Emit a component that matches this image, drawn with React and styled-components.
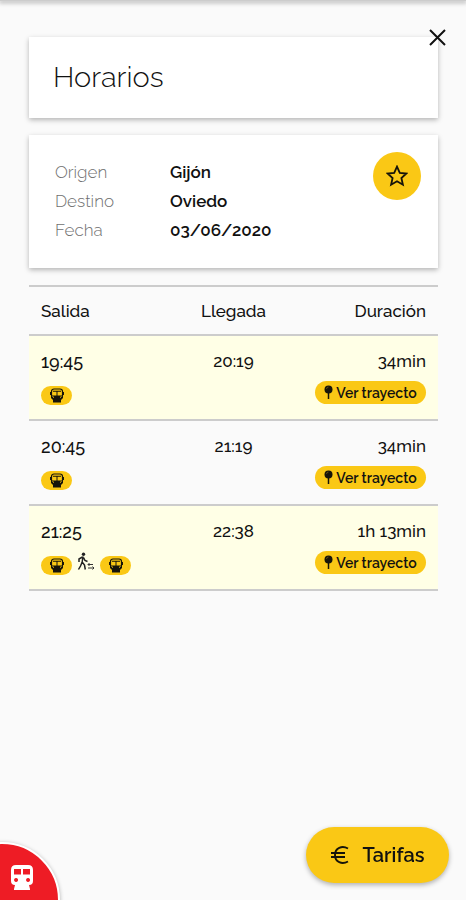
import React from 'react'
import styled, { createGlobalStyle } from 'styled-components'

const GlobalStyle = createGlobalStyle`
  * {
    box-sizing: border-box;
  }

  body {
    margin: 0;
    background-color: #fafafa;
    color: #111;
    font-family: Raleway, Lato, sans-serif;
    font-size: 17px;
    font-weight: 500;
  }

  button {
    border: 0;
    padding: 0;
    color: inherit;
    font: inherit;
    cursor: pointer;
  }
`

const TopBar = styled.header`
  height: 1px;
  background-color: #ccc;
  box-shadow: 0 1px 4px 1px rgba(0, 0, 0, 0.3);
`

const Page = styled.main`
  display: flex;
  flex-direction: column;
  gap: 17px;
  padding: 36px 28px 96px 29px;
`

const Card = styled.section`
  position: relative;
  display: flex;
  justify-content: space-between;
  align-items: flex-start;
  padding: ${({ $padding }) => $padding};
  background-color: white;
  box-shadow: 0 2px 5px rgba(0, 0, 0, 0.28);
`

const Title = styled.h1`
  margin: 0;
  font-size: 29px;
  font-weight: 300;
  line-height: 33px;
`

const CloseButton = styled.button`
  position: absolute;
  top: -12px;
  right: -12px;
  display: flex;
  padding: 4px;
  background: none;
`

const Details = styled.dl`
  display: grid;
  grid-template-columns: 115px auto;
  margin: 6px 0 0;
  line-height: 29px;
`

const Term = styled.dt`
  color: #707070;
  font-weight: 300;
`

const Value = styled.dd`
  margin: 0;
  font-weight: 600;
`

const StarButton = styled.button`
  display: flex;
  justify-content: center;
  align-items: center;
  width: 48px;
  height: 48px;
  border-radius: 50%;
  background-color: #fac815;
`

const Timetable = styled.table`
  width: 100%;
  border-collapse: collapse;
  table-layout: fixed;
  border-top: 2px solid #ccc;
`

const Heading = styled.th`
  height: 49px;
  padding: 0 12px;
  text-align: ${({ $align }) => $align};
  font-weight: 500;
`

const Row = styled.tr`
  border-bottom: 2px solid #ccc;

  tbody &:nth-child(odd) {
    background-color: #ffffe6;
  }
`

const Cell = styled.td`
  height: 85px;
  padding: 14px 12px 0;
  text-align: ${({ $align }) => $align};
  vertical-align: top;
  line-height: 22px;
`

const Departure = styled.div`
  font-size: 18px;
  line-height: 24px;
`

const Legs = styled.div`
  display: flex;
  align-items: flex-end;
  gap: 5px;
  height: 20px;
  margin-top: 11px;
`

const TrainPill = styled.span`
  display: flex;
  justify-content: center;
  align-items: center;
  width: 31px;
  height: 19px;
  border-radius: 10px;
  background-color: #fac815;
`

const RouteButton = styled.button`
  display: inline-flex;
  justify-content: center;
  align-items: center;
  gap: 3px;
  width: 111px;
  height: 23px;
  margin-top: 9px;
  border-radius: 12px;
  background-color: #fac815;
  font-size: 14px;
  font-weight: 600;
  white-space: nowrap;
`

const FaresButton = styled.button`
  position: fixed;
  right: 17px;
  bottom: 17px;
  display: flex;
  justify-content: center;
  align-items: center;
  gap: 13px;
  width: 143px;
  height: 56px;
  border-radius: 28px;
  background-color: #fac815;
  box-shadow: 0 2px 5px rgba(0, 0, 0, 0.3);
  font-size: 20px;
  font-weight: 600;
`

const MenuButton = styled.button`
  position: fixed;
  left: -56px;
  bottom: -58px;
  display: flex;
  width: 116px;
  height: 116px;
  && {
    border: 2px solid white;
    padding: 21px 0 0 65px;
  }
  border-radius: 50%;
  background-color: #ee1c25;
  box-shadow: 0 1px 4px rgba(0, 0, 0, 0.3);
`

const CloseIcon = () =>
  <svg width="17" height="17" viewBox="0 0 17 17" aria-hidden="true">
    <path d="M1 1l15 15M16 1L1 16" stroke="#111" strokeWidth="2" />
  </svg>

const StarIcon = () =>
  <svg width="22" height="22" viewBox="0 0 22 22" aria-hidden="true">
    <path
      d="M11 1.6l2.8 6.2 6.6.7-5 4.5 1.5 6.7-5.9-3.4-5.9 3.4L6.6 13l-5-4.5 6.6-.7z"
      fill="none"
      stroke="#16140a"
      strokeWidth="1.8"
      strokeLinejoin="miter"
    />
  </svg>

const TrainIcon = () =>
  <svg width="14" height="15" viewBox="0 0 14 15" aria-hidden="true">
    <rect x="1.5" y="1" width="11" height="9" rx="2.5" fill="none" stroke="#16140a" strokeWidth="1.2" />
    <path d="M1 7.5h12v2.5L11 12v2.5H3V12L1 10zM6.5 3h1v5h-1zM3 2.8h8v1H3z" fill="#16140a" />
    <path d="M.5 4v3M13.5 4v3" stroke="#16140a" />
    <path d="M2.5 8.5L4 9.500M11.5 8.500L10 9.500" stroke="#fac815" />
  </svg>

const WalkIcon = () =>
  <svg width="18" height="23" viewBox="0 0 18 23" aria-hidden="true">
    <circle cx="6.5" cy="2.3" r="1.7" fill="#222" />
    <path
      d="M6 4.5L5 11M5.5 4.8L2 7v3M6.5 5.5L8 8.5l2.5 1M5 10.5L3.5 14l-2 3.5M5.5 10.5l2 2.500.8 4.500"
      fill="none"
      stroke="#222"
      strokeWidth="1.5"
    />
    <path d="M11 12.5h5M12.5 11L11 12.5l1.5 1.5M11 16h6M15.500 14.500L17 16l-1.500 1.500" fill="none" stroke="#333" />
  </svg>

const PinIcon = () =>
  <svg width="9" height="15" viewBox="0 0 9 15" aria-hidden="true">
    <circle cx="4.5" cy="4.5" r="4" fill="#16140a" />
    <path d="M4.5 8v6" stroke="#16140a" strokeWidth="1.5" />
    <path d="M2.5 4a2 2 0 0 1 2-2" fill="none" stroke="#75601a" strokeWidth="0.7" />
  </svg>

const EuroIcon = () =>
  <svg width="19" height="18" viewBox="0 0 19 18" aria-hidden="true">
    <path
      d="M18 2.5C12 -.8 5 1.8 5 9s7 9.8 13 6.5M1 7h14M1 11h14"
      fill="none"
      stroke="#16140a"
      strokeWidth="1.9"
    />
  </svg>

const SubwayIcon = () =>
  <svg width="22" height="25" viewBox="0 0 22 25" aria-hidden="true">
    <path
      d="M5 0h12q5 0 5 5v11q0 4-4 4l1 4v1H3v-1l1-4q-4 0-4-4V5q0-5 5-5zM3 4v5.5h7V4zm9 0v5.5h7V4zM5 13a2 2 0 1 0 .1 0zm12 0a2 2 0 1 0 .1 0z"
      fill="white"
      fillRule="evenodd"
    />
  </svg>

const trips = [
  { departure: '19:45', arrival: '20:19', duration: '34min', legs: ['train'] },
  { departure: '20:45', arrival: '21:19', duration: '34min', legs: ['train'] },
  { departure: '21:25', arrival: '22:38', duration: '1h 13min', legs: ['train', 'walk', 'train'] }
]

const Trip = ({ departure, arrival, duration, legs }) =>
  <Row>
    <Cell $align="left">
      <Departure>{departure}</Departure>
      <Legs>
        {legs.map((leg, i) =>
          leg === 'walk' ? <WalkIcon key={i} /> : <TrainPill key={i}><TrainIcon /></TrainPill>
        )}
      </Legs>
    </Cell>
    <Cell $align="center">{arrival}</Cell>
    <Cell $align="right">
      {duration}
      <RouteButton type="button"><PinIcon />Ver trayecto</RouteButton>
    </Cell>
  </Row>

const App = () =>
  <>
    <GlobalStyle />
    <TopBar />
    <Page>
      <Card $padding="24px">
        <Title>Horarios</Title>
        <CloseButton type="button" aria-label="Cerrar"><CloseIcon /></CloseButton>
      </Card>
      <Card $padding="17px 17px 23px 26px">
        <Details>
          <Term>Origen</Term>
          <Value>Gijón</Value>
          <Term>Destino</Term>
          <Value>Oviedo</Value>
          <Term>Fecha</Term>
          <Value>03/06/2020</Value>
        </Details>
        <StarButton type="button" aria-label="Favorito"><StarIcon /></StarButton>
      </Card>
      <Timetable>
        <thead>
          <Row>
            <Heading $align="left" scope="col">Salida</Heading>
            <Heading $align="center" scope="col">Llegada</Heading>
            <Heading $align="right" scope="col">Duración</Heading>
          </Row>
        </thead>
        <tbody>
          {trips.map(trip => <Trip key={trip.departure} {...trip} />)}
        </tbody>
      </Timetable>
    </Page>
    <FaresButton type="button"><EuroIcon />Tarifas</FaresButton>
    <MenuButton type="button" aria-label="Trenes"><SubwayIcon /></MenuButton>
  </>

export default App
